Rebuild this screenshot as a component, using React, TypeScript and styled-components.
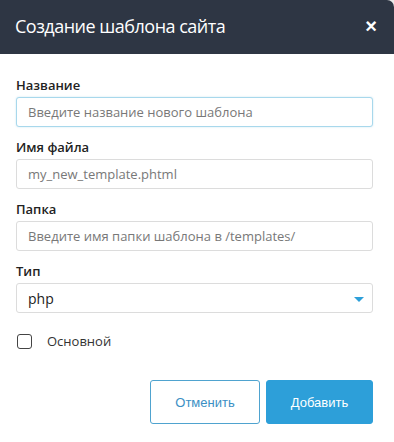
import React, { useState } from 'react';
import styled, { createGlobalStyle } from 'styled-components';

const GlobalStyle = createGlobalStyle`
  html, body {
    margin: 0;
    padding: 0;
    background: #e9e9e9;
  }
  * {
    box-sizing: border-box;
  }
`;

export default function App() {
  const [main, setMain] = useState(false);

  return (
    <>
      <GlobalStyle />
      <Modal>
        <Header>
          <Title>Создание шаблона сайта</Title>
          <CloseButton aria-label="Закрыть">×</CloseButton>
        </Header>
        <Body>
          <Field>
            <Label>Название</Label>
            <Input $focused placeholder="Введите название нового шаблона" />
          </Field>
          <Field>
            <Label>Имя файла</Label>
            <Input placeholder="my_new_template.phtml" />
          </Field>
          <Field>
            <Label>Папка</Label>
            <Input placeholder="Введите имя папки шаблона в /templates/" />
          </Field>
          <Field>
            <Label>Тип</Label>
            <SelectBox>
              <SelectValue>php</SelectValue>
              <Caret />
            </SelectBox>
          </Field>
          <CheckRow onClick={() => setMain(!main)}>
            <CheckBox $checked={main} />
            <CheckLabel>Основной</CheckLabel>
          </CheckRow>
        </Body>
        <Footer>
          <Button>Отменить</Button>
          <Button $primary>Добавить</Button>
        </Footer>
      </Modal>
    </>
  );
}

const Modal = styled.div`
  width: 394px;
  height: 442px;
  background: #fff;
  border-top-right-radius: 7px;
  overflow: hidden;
  font-family: 'Open Sans', 'Noto Sans', sans-serif;
`;

const Header = styled.div`
  height: 54px;
  background: #2e3644;
  display: flex;
  align-items: center;
  justify-content: space-between;
  padding: 0 17px 2px 15px;
`;

const Title = styled.h1`
  margin: 0;
  font-size: 18px;
  font-weight: 400;
  color: #fff;
  letter-spacing: -0.5px;
`;

const CloseButton = styled.button`
  border: 0;
  background: none;
  padding: 0;
  color: #fff;
  font-family: 'Liberation Sans', Arial, sans-serif;
  font-size: 20px;
  font-weight: 700;
  line-height: 1;
  cursor: pointer;
`;

const Body = styled.div`
  padding: 22px 21px 0 16px;
  display: flex;
  flex-direction: column;
  gap: 11px;
`;

const Field = styled.div`
  display: flex;
  flex-direction: column;
  gap: 3px;
`;

const Label = styled.label`
  font-size: 13px;
  font-weight: 600;
  color: #222;
  line-height: 18px;
`;

const Input = styled.input<{ $focused?: boolean }>`
  height: 30px;
  width: 100%;
  border: 1px solid ${(p) => (p.$focused ? '#a8d8ec' : '#dcdcdc')};
  border-radius: 3px;
  padding: 0 11px;
  font-family: inherit;
  font-size: 13px;
  color: #333;
  outline: none;
  box-shadow: ${(p) => (p.$focused ? '0 0 2px rgba(120, 190, 225, 0.4)' : 'none')};

  &::placeholder {
    color: #787878;
  }
`;

const SelectBox = styled.div`
  height: 30px;
  border: 1px solid #dcdcdc;
  border-radius: 3px;
  display: flex;
  align-items: center;
  justify-content: space-between;
  padding: 0 8px 0 11px;
`;

const SelectValue = styled.span`
  font-size: 14px;
  color: #222;
`;

const Caret = styled.span`
  width: 0;
  height: 0;
  border-left: 5px solid transparent;
  border-right: 5px solid transparent;
  border-top: 5px solid #2d9fd9;
  margin-top: 2px;
`;

const CheckRow = styled.div`
  display: flex;
  align-items: center;
  gap: 15px;
  margin-top: 8px;
  padding-left: 1px;
  cursor: pointer;
`;

const CheckBox = styled.span<{ $checked: boolean }>`
  width: 15px;
  height: 15px;
  border: 1.5px solid #444;
  border-radius: 3px;
  background: ${(p) => (p.$checked ? '#2d9fd9' : '#fff')};
`;

const CheckLabel = styled.span`
  font-size: 13px;
  color: #333;
`;

const Footer = styled.div`
  display: flex;
  justify-content: flex-end;
  gap: 6px;
  padding: 30px 21px 0 0;
`;

const Button = styled.button<{ $primary?: boolean }>`
  height: 44px;
  width: ${(p) => (p.$primary ? '107px' : '110px')};
  border-radius: 3px;
  border: 1px solid ${(p) => (p.$primary ? '#2d9fd9' : '#4fa3cf')};
  background: ${(p) => (p.$primary ? '#2d9fd9' : '#fff')};
  color: ${(p) => (p.$primary ? '#fff' : '#3b8fc4')};
  font-family: 'Liberation Sans', Arial, sans-serif;
  font-size: 13px;
  cursor: pointer;
`;
